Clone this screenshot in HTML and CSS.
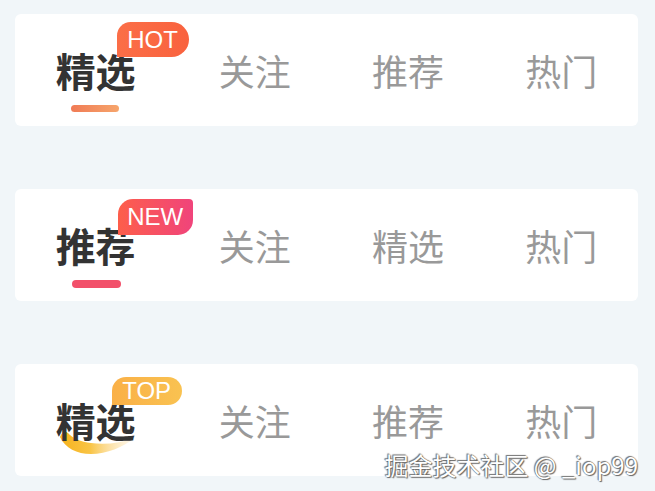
FILE: index.html
```
<!DOCTYPE html>
<html lang="zh">
<head>
<meta charset="utf-8">
<link rel="stylesheet" href="styles.css">
</head>
<body>
<div class="page">
  <div class="card">
    <div class="tab active">
      <span class="label">精选<span class="badge hot">HOT</span><span class="line line-hot"></span></span>
    </div>
    <div class="tab"><span class="label">关注</span></div>
    <div class="tab"><span class="label">推荐</span></div>
    <div class="tab"><span class="label">热门</span></div>
  </div>
  <div class="card">
    <div class="tab active">
      <span class="label">推荐<span class="badge new">NEW</span><span class="line line-new"></span></span>
    </div>
    <div class="tab"><span class="label">关注</span></div>
    <div class="tab"><span class="label">精选</span></div>
    <div class="tab"><span class="label">热门</span></div>
  </div>
  <div class="card">
    <div class="tab active">
      <span class="label"><svg class="smile" width="80" height="30" viewBox="0 0 80 30">
          <defs>
            <linearGradient id="sg" x1="0" y1="0" x2="1" y2="0">
              <stop offset="0" stop-color="#f6b21c"/>
              <stop offset="0.4" stop-color="#f9c445"/>
              <stop offset="1" stop-color="#fde6bd" stop-opacity="0.25"/>
            </linearGradient>
          </defs>
          <path d="M1 7 C 6 18, 18 24, 32 24 C 48 24, 64 17, 76 8 C 62 13, 46 15, 32 13 C 22 12, 13 8, 9 3 Q 4 -1, 1 7 Z" fill="url(#sg)"/>
        </svg><span class="text">精选</span><span class="badge top">TOP</span></span>
    </div>
    <div class="tab"><span class="label">关注</span></div>
    <div class="tab"><span class="label">推荐</span></div>
    <div class="tab"><span class="label">热门</span></div>
  </div>
  <div class="watermark">掘金技术社区 @ _iop99</div>
</div>
</body>
</html>
```
FILE: styles.css
```
html, body {
  margin: 0;
  padding: 0;
  background: #f1f6f9;
}
.page {
  position: relative;
  width: 655px;
  height: 491px;
  box-sizing: border-box;
  padding: 14px 17px 0 15px;
  display: flex;
  flex-direction: column;
  gap: 63px;
  font-family: "Noto Sans CJK SC", "Noto Sans", sans-serif;
}
.card {
  height: 112px;
  flex: none;
  background: #ffffff;
  border-radius: 6px;
  display: flex;
  align-items: center;
  padding-left: 10px;
}
.tab {
  flex: 1;
  display: flex;
  justify-content: center;
  align-items: center;
  font-size: 36px;
  color: #999999;
  line-height: 1;
}
.tab.active {
  font-size: 40px;
  font-weight: 700;
  color: #333333;
}
.label {
  position: relative;
  display: inline-block;
}
.tab.active .label {
  margin-right: 12px;
}
.text {
  position: relative;
}
.badge {
  position: absolute;
  box-sizing: border-box;
  font-family: "Liberation Sans", Arial, sans-serif;
  font-weight: 400;
  color: #ffffff;
  font-size: 24px;
  text-align: center;
  white-space: nowrap;
}
.badge.hot {
  left: 61px;
  top: -28px;
  width: 72px;
  height: 35px;
  line-height: 35px;
  border-radius: 14px 18px 18px 0;
  background: linear-gradient(90deg, #fb6e47, #f9623e);
}
.badge.new {
  left: 62px;
  top: -26px;
  width: 75px;
  height: 36px;
  line-height: 36px;
  border-radius: 15px 4px 15px 0;
  background: linear-gradient(90deg, #fd5e4b, #f0447b);
}
.badge.top {
  left: 56px;
  top: -23px;
  width: 70px;
  height: 28px;
  line-height: 28px;
  border-radius: 14px 14px 14px 0;
  background: linear-gradient(90deg, #fab047, #f9c251);
}
.line {
  position: absolute;
  left: 15px;
  bottom: -22px;
  width: 48px;
  height: 7px;
  border-radius: 4px;
}
.line-hot {
  background: linear-gradient(90deg, #f07b55, #f6a56c);
}
.line-new {
  left: 16px;
  bottom: -23px;
  width: 49px;
  height: 8px;
  background: #f2506a;
}
.smile {
  position: absolute;
  left: 3px;
  top: 30px;
}
.watermark {
  position: absolute;
  right: 17px;
  bottom: 14px;
  font-family: "Noto Sans CJK SC", "Noto Sans", sans-serif;
  font-size: 24px;
  color: #ffffff;
  line-height: 1;
  text-shadow: 0 0 1px #555, 1px 1px 1px #666, -1px -1px 1px #777;
}
```
